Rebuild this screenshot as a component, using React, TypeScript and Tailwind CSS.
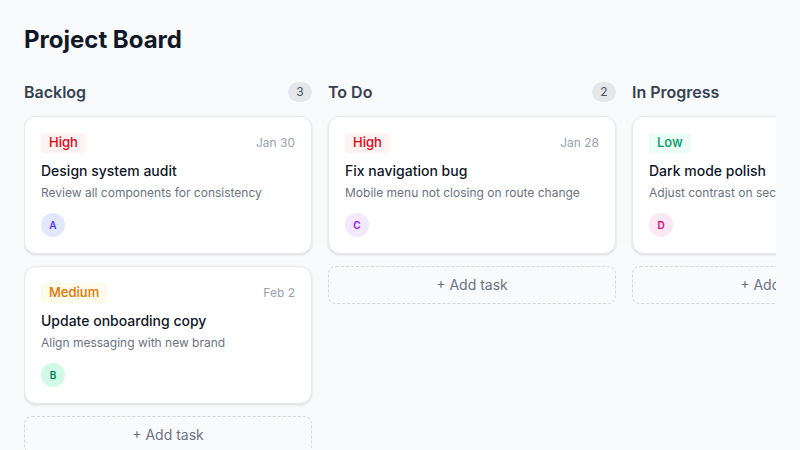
import React from 'react'

type Priority = 'High' | 'Medium' | 'Low'

type Task = {
  id: string
  title: string
  desc: string
  priority: Priority
  date: string
  initial: string
  avatar: string
}

type Column = {
  name: string
  tasks: Task[]
}

const priorityStyles: Record<Priority, string> = {
  High: 'bg-red-50 text-red-600',
  Medium: 'bg-amber-50 text-amber-600',
  Low: 'bg-emerald-50 text-emerald-600',
}

const columns: Column[] = [
  {
    name: 'Backlog',
    tasks: [
      { id: '1', title: 'Design system audit', desc: 'Review all components for consistency', priority: 'High', date: 'Jan 30', initial: 'A', avatar: 'bg-indigo-100 text-indigo-600' },
      { id: '2', title: 'Update onboarding copy', desc: 'Align messaging with new brand', priority: 'Medium', date: 'Feb 2', initial: 'B', avatar: 'bg-emerald-100 text-emerald-700' },
    ],
  },
  {
    name: 'To Do',
    tasks: [
      { id: '3', title: 'Fix navigation bug', desc: 'Mobile menu not closing on route change', priority: 'High', date: 'Jan 28', initial: 'C', avatar: 'bg-purple-100 text-purple-600' },
    ],
  },
  {
    name: 'In Progress',
    tasks: [
      { id: '4', title: 'Dark mode polish', desc: 'Adjust contrast on secondary surfaces', priority: 'Low', date: 'Feb 5', initial: 'D', avatar: 'bg-pink-100 text-pink-600' },
    ],
  },
]

function TaskCard({ task }: { task: Task }) {
  return (
    <div className="bg-white border border-gray-200 rounded-xl p-4 shadow-sm">
      <div className="flex items-center justify-between">
        <span className={`px-2 h-5 flex items-center rounded text-[13px] font-medium ${priorityStyles[task.priority]}`}>{task.priority}</span>
        <span className="text-xs text-gray-400">{task.date}</span>
      </div>
      <h3 className="mt-2 text-sm font-medium text-gray-900 leading-5">{task.title}</h3>
      <p className="mt-1 text-xs text-gray-500 leading-4 whitespace-nowrap">{task.desc}</p>
      <div className={`mt-3 w-6 h-6 rounded-full flex items-center justify-center text-[10px] font-semibold ${task.avatar}`}>{task.initial}</div>
    </div>
  )
}

export default function App() {
  return (
    <div className="min-h-screen bg-gray-50 p-6" style={{ fontFamily: 'Inter, "Noto Sans", sans-serif' }}>
      <h1 className="text-2xl font-bold text-gray-900 leading-8">Project Board</h1>
      <div className="mt-6 flex gap-4 overflow-hidden">
        {columns.map((col) => (
          <div key={col.name} className="w-72 shrink-0">
            <div className="flex items-center justify-between h-6 mb-3">
              <h2 className="text-base font-semibold text-gray-700">{col.name}</h2>
              <span className="min-w-6 h-5 px-2 rounded-full bg-gray-200 text-xs text-gray-600 flex items-center justify-center">{col.tasks.length + 1}</span>
            </div>
            <div className="flex flex-col gap-3">
              {col.tasks.map((t) => (
                <TaskCard key={t.id} task={t} />
              ))}
              <button className="w-full py-2 border border-dashed border-gray-300 rounded-lg text-sm text-gray-500 leading-5">+ Add task</button>
            </div>
          </div>
        ))}
      </div>
    </div>
  )
}
